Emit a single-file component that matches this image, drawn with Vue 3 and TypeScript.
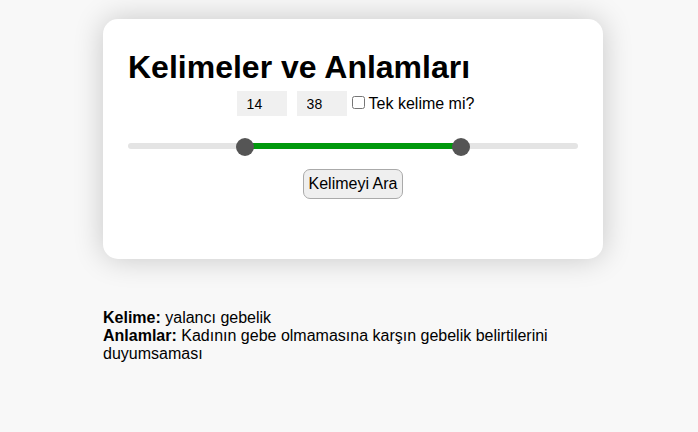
<script setup lang="ts">
import { computed, ref } from 'vue'

const MIN = 2
const MAX = 50
const lower = ref<number>(14)
const upper = ref<number>(38)
const single = ref<boolean>(false)

const percent = (value: number): number => ((value - MIN) / (MAX - MIN)) * 100
const fill = computed(() => ({
  marginLeft: `${percent(lower.value)}%`,
  width: `${percent(upper.value) - percent(lower.value)}%`,
}))
</script>

<template>
  <main class="page">
    <section class="card">
      <h1>Kelimeler ve Anlamları</h1>
      <div class="fields">
        <input v-model.number="lower" class="number" type="text" inputmode="numeric" aria-label="En az" />
        <input v-model.number="upper" class="number" type="text" inputmode="numeric" aria-label="En çok" />
        <label class="check"><input v-model="single" type="checkbox" />Tek kelime mi?</label>
      </div>
      <div class="slider">
        <div class="track"><div class="fill" :style="fill"></div></div>
        <input v-model.number="lower" class="range" type="range" :min="MIN" :max="MAX" aria-label="En az" />
        <input v-model.number="upper" class="range" type="range" :min="MIN" :max="MAX" aria-label="En çok" />
      </div>
      <button class="search" type="button">Kelimeyi Ara</button>
    </section>
    <section class="result">
      <p><b>Kelime:</b> yalancı gebelik</p>
      <p><b>Anlamlar:</b> Kadının gebe olmamasına karşın gebelik belirtilerini duyumsaması</p>
    </section>
  </main>
</template>

<style>
body {
  background: #f8f8f8;
}
</style>

<style scoped>
.page {
  max-width: 500px;
  margin: 0 auto;
  padding: 19px 0 20px 8px;
  box-sizing: content-box;
  display: flex;
  flex-direction: column;
  gap: 50px;
  font-family: "Liberation Sans", Arial, sans-serif;
  font-size: 16px;
  line-height: 18px;
  color: #000;
}

.card {
  display: flex;
  flex-direction: column;
  padding: 30px 25px 60px;
  border-radius: 15px;
  background: #fff;
  box-shadow: 0 0 30px rgba(0, 0, 0, 0.2);
}

h1 {
  margin: 0 0 6px;
  font-size: 32px;
  line-height: 36px;
}

.fields {
  display: flex;
  justify-content: center;
  align-items: center;
}

.number {
  box-sizing: border-box;
  width: 50px;
  height: 25px;
  margin: 0 5px;
  padding: 0 10px;
  border: 0;
  background: #f0f0f0;
  color: #000;
  font-family: inherit;
  font-size: 14px;
}

.check {
  display: flex;
  align-items: center;
  gap: 4px;
}

.check input {
  width: 13px;
  height: 13px;
  margin: 0 0 2px;
}

.slider {
  display: grid;
  align-items: center;
  margin: 22px 0 13px;
}

.slider > * {
  grid-area: 1 / 1;
}

.track {
  height: 6px;
  margin-bottom: 2px;
  border-radius: 3px;
  background: #e4e4e4;
}

.fill {
  height: 6px;
  background: #00990d;
}

.range {
  appearance: none;
  width: 100%;
  height: 18px;
  margin: 0;
  background: transparent;
  pointer-events: none;
}

.range::-webkit-slider-thumb {
  appearance: none;
  width: 18px;
  height: 18px;
  border-radius: 50%;
  background: #555;
  cursor: pointer;
  pointer-events: auto;
}

.search {
  align-self: center;
  height: 30px;
  padding: 0 5px;
  border: 1px solid #aaa;
  border-radius: 7px;
  background: #efefef;
  color: #000;
  font-family: inherit;
  font-size: 16px;
}

.result p {
  margin: 0;
}
</style>
